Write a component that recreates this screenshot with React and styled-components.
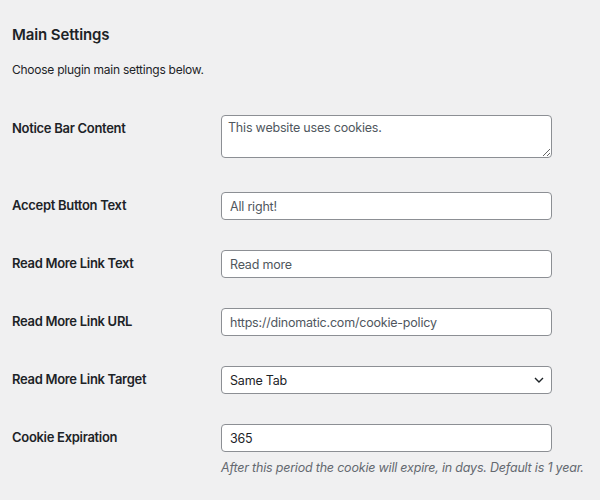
import React from "react";
import styled, { createGlobalStyle } from "styled-components";

const GlobalStyle = createGlobalStyle`
  html, body {
    margin: 0;
    background: #f0f0f1;
  }
`;

const Page = styled.div`
  padding: 0 12px;
  font-family: Inter, "Noto Sans", "Liberation Sans", sans-serif;
  color: #1d2327;
`;

const Title = styled.h2`
  margin: 0;
  padding-top: 24px;
  font-size: 15px;
  font-weight: 600;
  line-height: 22px;
  letter-spacing: -0.1px;
`;

const Intro = styled.p`
  margin: 14px 0 0;
  font-size: 12px;
  line-height: 19px;
  letter-spacing: -0.25px;
`;

const Table = styled.div`
  margin-top: 21px;
  display: flex;
  flex-direction: column;
`;

const Row = styled.div`
  display: flex;
`;

const Label = styled.div`
  width: 209px;
  flex: none;
  padding-top: 19px;
  font-size: 13px;
  font-weight: 600;
  line-height: 18px;
  letter-spacing: -0.3px;
`;

const Field = styled.div`
  width: 331px;
  padding: 15px 0;
`;

const fieldBox = `
  box-sizing: border-box;
  width: 100%;
  border: 1px solid #8c8f94;
  border-radius: 4px;
  background: #fff;
  font-family: Inter, "Noto Sans", "Liberation Sans", sans-serif;
  font-size: 12.5px;
  letter-spacing: -0.2px;
  outline: none;
  margin: 0;
`;

const TextInput = styled.input`
  ${fieldBox}
  display: block;
  height: 28px;
  padding: 0 8px;
  color: ${({ $dark }) => ($dark ? "#1d2327" : "#50575e")};
`;

const TextArea = styled.textarea`
  ${fieldBox}
  display: block;
  height: 43px;
  padding: 3px 6px;
  line-height: 18px;
  color: #50575e;
  margin-bottom: 4px;
`;

const SelectWrap = styled.div`
  position: relative;
`;

const Select = styled.select`
  ${fieldBox}
  display: block;
  height: 28px;
  padding: 0 24px 0 8px;
  color: #1d2327;
  appearance: none;
  -webkit-appearance: none;
`;

const Chevron = styled.svg`
  position: absolute;
  right: 8px;
  top: 11px;
  pointer-events: none;
`;

const Hint = styled.p`
  margin: 6px 0 0;
  font-size: 12.5px;
  line-height: 19px;
  font-style: italic;
  letter-spacing: -0.2px;
  color: #646970;
  white-space: nowrap;
`;

export default function App() {
  return (
    <Page>
      <GlobalStyle />
      <Title>Main Settings</Title>
      <Intro>Choose plugin main settings below.</Intro>
      <Table>
        <Row>
          <Label>Notice Bar Content</Label>
          <Field>
            <TextArea readOnly value="This website uses cookies." />
          </Field>
        </Row>
        <Row>
          <Label>Accept Button Text</Label>
          <Field>
            <TextInput readOnly value="All right!" />
          </Field>
        </Row>
        <Row>
          <Label>Read More Link Text</Label>
          <Field>
            <TextInput readOnly value="Read more" />
          </Field>
        </Row>
        <Row>
          <Label>Read More Link URL</Label>
          <Field>
            <TextInput readOnly value="https://dinomatic.com/cookie-policy" />
          </Field>
        </Row>
        <Row>
          <Label>Read More Link Target</Label>
          <Field>
            <SelectWrap>
              <Select defaultValue="same">
                <option value="same">Same Tab</option>
                <option value="new">New Tab</option>
              </Select>
              <Chevron width="10" height="6" viewBox="0 0 10 6">
                <path d="M1 1 L5 5 L9 1" fill="none" stroke="#1d2327" strokeWidth="1.4" />
              </Chevron>
            </SelectWrap>
          </Field>
        </Row>
        <Row>
          <Label>Cookie Expiration</Label>
          <Field>
            <TextInput $dark readOnly value="365" />
            <Hint>After this period the cookie will expire, in days. Default is 1 year.</Hint>
          </Field>
        </Row>
      </Table>
    </Page>
  );
}
